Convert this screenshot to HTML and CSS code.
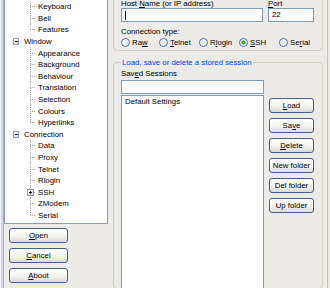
FILE: index.html
```html
<!DOCTYPE html>
<html lang="en">
<head>
    <meta charset="UTF-8">
    <title>PuTTY Configuration</title>
    <link rel="stylesheet" href="styles.css">
</head>
<body>
    <div class="dialog">
        <div class="side">
            <div class="tree">
                <div class="row"><span class="cell"></span><span class="cell wide tee"></span><span class="leaf">Keyboard</span></div>
                <div class="row"><span class="cell"></span><span class="cell wide tee"></span><span class="leaf">Bell</span></div>
                <div class="row"><span class="cell"></span><span class="cell wide end"></span><span class="leaf">Features</span></div>
                <div class="row"><span class="cell"><i class="twisty minus"></i></span><span class="node">Window</span></div>
                <div class="row"><span class="cell"></span><span class="cell wide tee"></span><span class="leaf">Appearance</span></div>
                <div class="row"><span class="cell"></span><span class="cell wide tee"></span><span class="leaf">Background</span></div>
                <div class="row"><span class="cell"></span><span class="cell wide tee"></span><span class="leaf">Behaviour</span></div>
                <div class="row"><span class="cell"></span><span class="cell wide tee"></span><span class="leaf">Translation</span></div>
                <div class="row"><span class="cell"></span><span class="cell wide tee"></span><span class="leaf">Selection</span></div>
                <div class="row"><span class="cell"></span><span class="cell wide tee"></span><span class="leaf">Colours</span></div>
                <div class="row"><span class="cell"></span><span class="cell wide end"></span><span class="leaf">Hyperlinks</span></div>
                <div class="row"><span class="cell"><i class="twisty minus"></i></span><span class="node">Connection</span></div>
                <div class="row"><span class="cell"></span><span class="cell wide tee"></span><span class="leaf">Data</span></div>
                <div class="row"><span class="cell"></span><span class="cell wide tee"></span><span class="leaf">Proxy</span></div>
                <div class="row"><span class="cell"></span><span class="cell wide tee"></span><span class="leaf">Telnet</span></div>
                <div class="row"><span class="cell"></span><span class="cell wide tee"></span><span class="leaf">Rlogin</span></div>
                <div class="row"><span class="cell"></span><span class="cell wide tee"><i class="twisty plus"></i></span><span class="leaf">SSH</span></div>
                <div class="row"><span class="cell"></span><span class="cell wide tee"></span><span class="leaf">ZModem</span></div>
                <div class="row"><span class="cell"></span><span class="cell wide end"></span><span class="leaf">Serial</span></div>
            </div>
            <div class="actions">
                <button class="btn"><u>O</u>pen</button>
                <button class="btn"><u>C</u>ancel</button>
                <button class="btn"><u>A</u>bout</button>
            </div>
        </div>

        <div class="panel">
            <div class="group dest">
                <div class="fields">
                    <div class="field host">
                        <div class="label">Host <u>N</u>ame (or IP address)</div>
                        <div class="textbox"><span class="caret"></span></div>
                    </div>
                    <div class="field port">
                        <div class="label"><u>P</u>ort</div>
                        <div class="textbox">22</div>
                    </div>
                </div>
                <div class="caption">Connection type:</div>
                <div class="radios">
                    <div class="radio"><span class="dot"></span><span>Ra<u>w</u></span></div>
                    <div class="radio"><span class="dot"></span><span><u>T</u>elnet</span></div>
                    <div class="radio"><span class="dot"></span><span>R<u>l</u>ogin</span></div>
                    <div class="radio"><span class="dot on"></span><span><u>S</u>SH</span></div>
                    <div class="radio"><span class="dot"></span><span>Se<u>r</u>ial</span></div>
                </div>
            </div>

            <fieldset class="group sessions">
                <legend>Load, save or delete a stored session</legend>
                <div class="session-body">
                    <div class="session-list">
                        <div class="label saved">Sav<u>e</u>d Sessions</div>
                        <div class="textbox"></div>
                        <div class="listbox">
                            <div class="item">Default Settings</div>
                        </div>
                    </div>
                    <div class="session-buttons">
                        <button class="btn small"><u>L</u>oad</button>
                        <button class="btn small">Sa<u>v</u>e</button>
                        <button class="btn small"><u>D</u>elete</button>
                        <button class="btn small">New folder</button>
                        <button class="btn small">Del folder</button>
                        <button class="btn small">Up folder</button>
                    </div>
                </div>
            </fieldset>
        </div>
    </div>
</body>
</html>
```

FILE: styles.css
```css
body{
    margin: 0;
    width: 330px;
    height: 288px;
    overflow: hidden;
    background: #ecebe8;
    font-family: "Liberation Sans", Arial, sans-serif;
    font-size: 7.8px;
    color: #000;
}
.dialog{
    display: flex;
    height: 288px;
    overflow: hidden;
}

/* left column: tree + buttons */
.side{
    width: 108px;
    flex: none;
    display: flex;
    flex-direction: column;
    background: linear-gradient(90deg, #f4f4fa 0 1px, #d4d6e8 1px 3px, #a9afcb 3px 4px, transparent 4px);
}
.tree{
    margin-left: 4px;
    width: 104px;
    height: 224px;
    box-sizing: border-box;
    border: 1px solid #8f9cba;
    border-top: none;
    background: #fff;
    padding-top: 1px;
    overflow: hidden;
}
.row{
    height: 11.6px;
    display: flex;
    align-items: center;
    white-space: nowrap;
}
.cell{
    width: 14px;
    height: 100%;
    flex: none;
    display: flex;
    align-items: center;
}
.cell.wide{
    width: 17px;
}
.tee{
    background:
        repeating-linear-gradient(90deg, #a8a8a8 0 1px, transparent 1px 2px) 11px 50% / 6px 1px no-repeat,
        repeating-linear-gradient(#a8a8a8 0 1px, transparent 1px 2px) 11px 0 / 1px 100% no-repeat;
}
.end{
    background:
        repeating-linear-gradient(90deg, #a8a8a8 0 1px, transparent 1px 2px) 11px 50% / 6px 1px no-repeat,
        repeating-linear-gradient(#a8a8a8 0 1px, transparent 1px 2px) 11px 0 / 1px 50% no-repeat;
}
.twisty{
    display: block;
    width: 7px;
    height: 7px;
    margin-left: 8px;
    box-sizing: border-box;
    border: 1px solid #8a9ab8;
}
.twisty.minus{
    background:
        linear-gradient(#1a1a1a, #1a1a1a) center / 3px 1px no-repeat,
        linear-gradient(135deg, #fff, #d6d6cc);
}
.twisty.plus{
    background:
        linear-gradient(#1a1a1a, #1a1a1a) center / 3px 1px no-repeat,
        linear-gradient(#1a1a1a, #1a1a1a) center / 1px 3px no-repeat,
        linear-gradient(135deg, #fff, #d6d6cc);
}
.node{
    margin-left: 5px;
}
.leaf{
    margin-left: 2px;
}

.actions{
    margin: 4px 0 0 9px;
    display: flex;
    flex-direction: column;
    gap: 5px;
}
.btn{
    width: 59px;
    height: 15px;
    padding: 0;
    box-sizing: border-box;
    border: 1px solid #45608c;
    border-radius: 3px;
    background: linear-gradient(#ffffff, #f3f3ef 55%, #dcdcd4);
    font: inherit;
    color: #000;
    line-height: 12px;
    text-align: center;
}
.btn.small{
    width: 45px;
}

/* right column */
.panel{
    flex: 1;
    padding-left: 5px;
    border-right: 1px solid #c2c2ca;
    margin-right: 2px;
}
.group{
    width: 210px;
    box-sizing: border-box;
    border: 1px solid #d0d0bf;
}
.dest{
    height: 51px;
    border-top: none;
    border-radius: 0 0 4px 4px;
    padding: 0 7px;
}
.fields{
    display: flex;
    gap: 5px;
}
.host{
    width: 142px;
}
.port{
    width: 46px;
}
.label{
    height: 8px;
    line-height: 7px;
    white-space: nowrap;
}
.textbox{
    height: 14px;
    box-sizing: border-box;
    border: 1px solid #7f9db9;
    background: #fff;
    padding: 0 3px;
    line-height: 12px;
    display: flex;
    align-items: center;
}
.caret{
    width: 1px;
    height: 9px;
    background: #000;
}
.caption{
    margin-top: 5px;
    height: 9px;
    line-height: 9px;
}
.radios{
    margin-top: 1px;
    height: 10px;
    display: grid;
    grid-template-columns: 38px 40px 40px 40px auto;
}
.radio{
    display: flex;
    align-items: center;
    gap: 2px;
}
.dot{
    width: 9px;
    height: 9px;
    flex: none;
    box-sizing: border-box;
    border: 1px solid #4f709e;
    border-radius: 50%;
    background: radial-gradient(circle at 65% 65%, #e2e2da, #fff 70%);
}
.dot.on{
    background: radial-gradient(circle, #55cf4f 0, #2a9b24 1.8px, #fff 2.4px, #ececE6 100%);
}

.sessions{
    margin: 7px 0 0;
    padding: 2px 7px 0;
    height: 231px;
    border-radius: 4px;
    overflow: hidden;
}
.sessions legend{
    padding: 0 1px;
    line-height: 9px;
    color: #0046d5;
}
.session-body{
    display: flex;
    gap: 5px;
}
.session-list{
    width: 143px;
}
.label.saved{
    height: 11px;
    line-height: 10px;
}
.listbox{
    margin-top: 1px;
    height: 193px;
    box-sizing: border-box;
    border: 1px solid #7f9db9;
    border-bottom: none;
    background: #fff;
    padding: 1px 3px;
}
.item{
    line-height: 10px;
}
.session-buttons{
    padding-top: 29px;
    display: flex;
    flex-direction: column;
    gap: 5px;
}
```
